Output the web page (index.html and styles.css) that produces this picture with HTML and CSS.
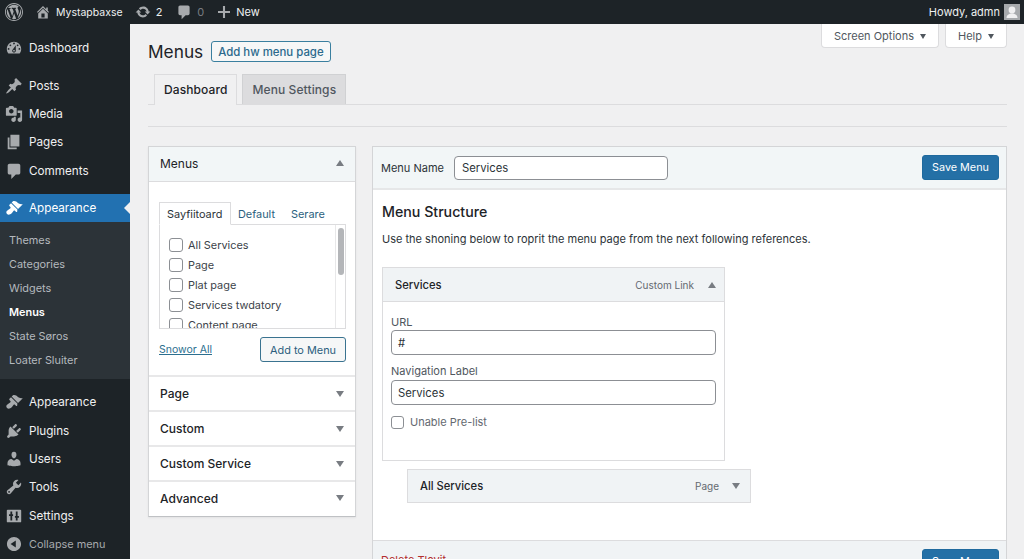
FILE: index.html
```html
<!DOCTYPE html>
<html lang="en">
<head>
<meta charset="utf-8">
<title>Menus</title>
<link rel="stylesheet" href="styles.css">
</head>
<body>
<header class="adminbar">
  <div class="bar-left">
    <svg class="bar-logo" viewBox="0 0 20 20"><path d="M20 10c0-5.52-4.48-10-10-10S0 4.48 0 10s4.48 10 10 10 10-4.48 10-10zM10 1.01c4.97 0 8.99 4.02 8.99 8.99s-4.02 8.99-8.99 8.99S1.01 14.97 1.01 10 5.03 1.01 10 1.01zM8.01 14.82L4.96 6.61c.49-.03 1.05-.08 1.05-.08.43-.05.38-1.01-.06-.99 0 0-1.29.1-2.13.1-.15 0-.33 0-.52-.01 1.44-2.17 3.9-3.6 6.7-3.6 2.09 0 3.99.79 5.41 2.09-.6-.08-1.45.35-1.45 1.42 0 .66.38 1.22.79 1.88.31.54.5 1.22.5 2.21 0 1.34-1.27 4.48-1.27 4.48l-2.71-7.5c.48-.03.75-.16.75-.16.43-.05.38-1.1-.05-1.08 0 0-1.3.11-2.14.11-.78 0-2.11-.11-2.11-.11-.43-.02-.48 1.06-.05 1.08l.84.08 1.12 3.04zm6.02 2.15L16.64 10s.67-1.69.39-3.81c.63 1.14.94 2.42.94 3.81 0 2.96-1.56 5.58-3.94 6.97zM2.68 6.77L6.5 17.25c-2.67-1.3-4.47-4.08-4.47-7.25 0-1.16.2-2.23.65-3.23zm7.45 4.53l2.29 6.25c-.75.27-1.57.42-2.42.42-.72 0-1.41-.11-2.06-.3z"/></svg>
    <span class="bar-item site"><svg class="bar-ico" viewBox="0 0 20 20"><path d="M16 8.5l1.53 1.53-1.06 1.06L10 4.62l-6.47 6.47-1.06-1.06L10 2.5l4 4v-2h2v4zm-6-2.46l6 5.99V18H4v-5.97zM12 17v-5H8v5h4z"/></svg>Mystapbaxse</span>
    <span class="bar-item updates"><svg class="bar-ico" viewBox="0 0 20 20"><path d="M10.2 3.28c3.53 0 6.43 2.61 6.92 6h2.08l-3.5 4-3.5-4h2.32c-.45-1.97-2.21-3.45-4.32-3.45-1.45 0-2.73.71-3.54 1.78L4.95 5.66C6.23 4.2 8.11 3.28 10.2 3.28zm-.4 13.44c-3.52 0-6.43-2.61-6.92-6H.8l3.5-4c1.17 1.33 2.33 2.67 3.5 4H5.48c.45 1.97 2.21 3.45 4.32 3.45 1.45 0 2.73-.71 3.54-1.78l1.71 1.95c-1.28 1.46-3.15 2.38-5.25 2.38z"/></svg>2</span>
    <span class="bar-item comments"><svg class="bar-ico" viewBox="0 0 20 20"><path d="M5 2h10c1.1 0 2 .9 2 2v8c0 1.1-.9 2-2 2h-3l-5 5v-5H5c-1.1 0-2-.9-2-2V4c0-1.1.9-2 2-2z"/></svg><span class="dim">0</span></span>
    <span class="bar-item new"><svg class="bar-ico" viewBox="0 0 20 20"><path d="M8.7 2.5h2.6v6.2h6.2v2.6h-6.2v6.2H8.7v-6.2H2.5V8.7h6.2z"/></svg>New</span>
  </div>
  <div class="bar-right">
    <span>Howdy, admn</span>
    <svg class="avatar" viewBox="0 0 16 16"><rect width="16" height="16" fill="#a7aaad"/><circle cx="8" cy="6" r="3.4" fill="#f0f0f1"/><path d="M2.5 14c0-3 2.4-4.6 5.5-4.6s5.5 1.6 5.5 4.6z" fill="#f0f0f1"/></svg>
  </div>
</header>
<div class="layout">
  <nav class="sidebar">
    <ul class="menu menu-top">
      <li><svg class="ico" viewBox="0 0 20 20"><path d="M3.76 16h12.48c1.1-1.37 1.76-3.11 1.76-5 0-4.42-3.58-8-8-8s-8 3.58-8 8c0 1.89.66 3.63 1.76 5zM10 4c.55 0 1 .45 1 1s-.45 1-1 1-1-.45-1-1 .45-1 1-1zM6 6c.55 0 1 .45 1 1s-.45 1-1 1-1-.45-1-1 .45-1 1-1zm8 0c.55 0 1 .45 1 1s-.45 1-1 1-1-.45-1-1 .45-1 1-1zm-5.37 5.55L12 7v6c0 1.1-.9 2-2 2s-2-.9-2-2c0-.57.24-1.08.63-1.45zM4 10c.55 0 1 .45 1 1s-.45 1-1 1-1-.45-1-1 .45-1 1-1zm12 0c.55 0 1 .45 1 1s-.45 1-1 1-1-.45-1-1 .45-1 1-1zm-5 3c0-.55-.45-1-1-1s-1 .45-1 1 .45 1 1 1 1-.45 1-1z"/></svg>Dashboard</li>
    </ul>
    <ul class="menu menu-group">
      <li><svg class="ico" viewBox="0 0 20 20"><path d="M10.44 3.02l1.82-1.82 6.36 6.35-1.83 1.82c-1.05-.68-2.48-.57-3.41.36l-.75.75c-.92.93-1.04 2.35-.35 3.41l-1.83 1.82-2.41-2.41-2.8 2.79c-.42.42-3.38 2.71-3.8 2.29s1.86-3.39 2.28-3.81l2.79-2.79L4.1 9.36l1.83-1.82c1.05.69 2.48.57 3.4-.36l.75-.75c.93-.92 1.05-2.35.36-3.41z"/></svg>Posts</li>
      <li><svg class="ico" viewBox="0 0 20 20"><path d="M13 11V4c0-.55-.45-1-1-1h-1.67L9 1H5L3.67 3H2c-.55 0-1 .45-1 1v7c0 .55.45 1 1 1h10c.55 0 1-.45 1-1zM7 4.5c1.38 0 2.5 1.12 2.5 2.5S8.38 9.5 7 9.5 4.5 8.38 4.5 7 5.62 4.5 7 4.5zM14 6h5v10.5c0 1.38-1.12 2.5-2.5 2.5S14 17.88 14 16.5s1.12-2.5 2.5-2.5c.17 0 .34.02.5.05V9h-3V6zm-4 8.05V13h2v3.5c0 1.38-1.12 2.5-2.5 2.5S7 17.88 7 16.5 8.12 14 9.5 14c.17 0 .34.02.5.05z"/></svg>Media</li>
      <li><svg class="ico" viewBox="0 0 20 20"><path d="M6 15V2h10v13H6zm-1 1h8v2H3V5h2v11z"/></svg>Pages</li>
      <li><svg class="ico" viewBox="0 0 20 20"><path d="M5 2h10c1.1 0 2 .9 2 2v8c0 1.1-.9 2-2 2h-3l-5 5v-5H5c-1.1 0-2-.9-2-2V4c0-1.1.9-2 2-2z"/></svg>Comments</li>
    </ul>
    <div class="menu-current">
      <svg class="ico" viewBox="0 0 20 20"><path d="M14.48 11.06L7.41 3.99l1.5-1.5c.5-.56 2.3-.47 3.51.32 1.21.8 1.43 1.28 2.91 2.1 1.18.64 2.45 1.26 4.45.85zm-.71.71L6.7 4.7 4.93 6.47c-.39.39-.39 1.02 0 1.41l1.06 1.06c.39.39.39 1.03 0 1.42-.6.6-1.43 1.11-2.21 1.69-.35.26-.7.53-1.01.84C1.43 13.23.91 15.39 2.26 16.72c1.33 1.35 3.49.83 4.84-.52.3-.3.57-.65.83-1 .58-.78 1.09-1.61 1.7-2.21.39-.39 1.02-.39 1.41 0l1.06 1.06c.39.39 1.02.39 1.41 0z"/></svg>Appearance
    </div>
    <ul class="submenu">
      <li>Themes</li>
      <li>Categories</li>
      <li>Widgets</li>
      <li class="sub-current">Menus</li>
      <li>State Søros</li>
      <li>Loater Sluiter</li>
    </ul>
    <ul class="menu menu-lower">
      <li><svg class="ico" viewBox="0 0 20 20"><path d="M14.48 11.06L7.41 3.99l1.5-1.5c.5-.56 2.3-.47 3.51.32 1.21.8 1.43 1.28 2.91 2.1 1.18.64 2.45 1.26 4.45.85zm-.71.71L6.7 4.7 4.93 6.47c-.39.39-.39 1.02 0 1.41l1.06 1.06c.39.39.39 1.03 0 1.42-.6.6-1.43 1.11-2.21 1.69-.35.26-.7.53-1.01.84C1.43 13.23.91 15.39 2.26 16.72c1.33 1.35 3.49.83 4.84-.52.3-.3.57-.65.83-1 .58-.78 1.09-1.61 1.7-2.21.39-.39 1.02-.39 1.41 0l1.06 1.06c.39.39 1.02.39 1.41 0z"/></svg>Appearance</li>
      <li><svg class="ico" viewBox="0 0 20 20"><path d="M13.11 4.36L9.87 7.6 8 5.73l3.24-3.24c.35-.34 1.05-.2 1.56.32.52.51.66 1.21.31 1.55zm-8 1.77l.91-1.12 9.01 9.01-1.19.84c-.71.71-2.63 1.16-3.82 1.16H6.14L4.9 17.26c-.59.59-1.54.59-2.12 0-.59-.58-.59-1.53 0-2.12l1.24-1.24v-3.88c0-1.13.4-3.19 1.09-3.89zm7.26 3.97l3.24-3.24c.34-.35 1.04-.21 1.55.31.52.51.66 1.21.31 1.55l-3.24 3.25z"/></svg>Plugins</li>
      <li><svg class="ico" viewBox="0 0 20 20"><path d="M10 9.25c-2.27 0-2.73-3.44-2.73-3.44C7 4.02 7.82 2 9.97 2c2.16 0 2.98 2.02 2.71 3.81 0 0-.41 3.44-2.68 3.44zm0 2.57L12.72 10c2.39 0 4.52 2.33 4.52 4.53v2.49s-3.65 1.13-7.24 1.13c-3.65 0-7.24-1.13-7.24-1.13v-2.49c0-2.25 1.94-4.48 4.47-4.48z"/></svg>Users</li>
      <li><svg class="ico" viewBox="0 0 20 20"><path d="M16.68 9.77c-1.34 1.34-3.3 1.67-4.95.99l-5.41 6.52c-.99.99-2.59.99-3.58 0s-.99-2.59 0-3.57l6.52-5.42c-.68-1.65-.35-3.61.99-4.95 1.28-1.28 3.12-1.62 4.72-1.06l-2.89 2.89 2.82 2.82 2.86-2.87c.53 1.58.18 3.39-1.08 4.65zM3.81 16.21c.4.39 1.04.39 1.43 0 .4-.4.4-1.04 0-1.43-.39-.4-1.03-.4-1.43 0-.39.39-.39 1.03 0 1.43z"/></svg>Tools</li>
      <li><svg class="ico" viewBox="0 0 20 20"><path fill-rule="evenodd" d="M3 3h14a1 1 0 0 1 1 1v12a1 1 0 0 1-1 1H3a1 1 0 0 1-1-1V4a1 1 0 0 1 1-1zm3 2v3H4.5v2H6v5h2v-5h1V8H8V5zm6 0v5h-1v2h1v3h2v-3h1.5v-2H14V5z"/></svg>Settings</li>
      <li class="collapse"><svg class="ico" viewBox="0 0 20 20"><path d="M10 2.16c4.33 0 7.84 3.51 7.84 7.84s-3.51 7.84-7.84 7.84S2.16 14.33 2.16 10 5.71 2.16 10 2.16zm2 11.72V6.12L6.18 9.97z"/></svg>Collapse menu</li>
    </ul>
  </nav>
  <main class="content">
    <div class="screen-meta">
      <span class="meta-tab">Screen Options<i class="caret-down dark"></i></span>
      <span class="meta-tab">Help<i class="caret-down dark"></i></span>
    </div>
    <div class="title-row">
      <h1>Menus</h1>
      <a class="btn-outline">Add hw menu page</a>
    </div>
    <div class="tabs">
      <span class="tab tab-active">Dashboard</span>
      <span class="tab">Menu Settings</span>
    </div>
    <hr class="rule">
    <div class="columns">
      <aside class="side-panel">
        <div class="acc-open">
          <div class="acc-head tinted"><span>Menus</span><i class="caret-up"></i></div>
          <div class="acc-body">
            <div class="mini-tabs">
              <span class="mini-tab mini-active">Sayfiitoard</span>
              <span class="mini-tab">Default</span>
              <span class="mini-tab">Serare</span>
            </div>
            <div class="list-box">
              <ul class="check-list">
                <li><i class="check"></i>All Services</li>
                <li><i class="check"></i>Page</li>
                <li><i class="check"></i>Plat page</li>
                <li><i class="check"></i>Services twdatory</li>
                <li><i class="check"></i>Content page</li>
              </ul>
              <div class="scroll-track"><div class="scroll-thumb"></div></div>
            </div>
            <div class="acc-actions">
              <a class="select-all">Snowor All</a>
              <a class="btn-add">Add to Menu</a>
            </div>
          </div>
        </div>
        <div class="acc-head"><span>Page</span><i class="caret-down"></i></div>
        <div class="acc-head"><span>Custom</span><i class="caret-down"></i></div>
        <div class="acc-head"><span>Custom Service</span><i class="caret-down"></i></div>
        <div class="acc-head last"><span>Advanced</span><i class="caret-down"></i></div>
      </aside>
      <section class="editor">
        <div class="editor-head">
          <label class="name-label">Menu Name</label>
          <div class="field name-field">Services</div>
          <a class="btn-primary">Save Menu</a>
        </div>
        <div class="editor-body">
          <h2>Menu Structure</h2>
          <p class="intro">Use the shoning below to roprit the menu page from the next following references.</p>
          <div class="item-card">
            <div class="item-head"><strong>Services</strong><span class="item-type">Custom Link</span><i class="caret-up"></i></div>
            <div class="item-body">
              <label class="f-label">URL</label>
              <div class="field wide">#</div>
              <label class="f-label second">Navigation Label</label>
              <div class="field wide">Services</div>
              <div class="check-row"><i class="check"></i>Unable Pre-list</div>
            </div>
          </div>
          <div class="item-closed">
            <strong>All Services</strong><span class="item-type">Page</span><i class="caret-down"></i>
          </div>
        </div>
        <div class="editor-foot">
          <a class="delete">Delete Tlovit</a>
          <a class="btn-primary">Save Menu</a>
        </div>
      </section>
    </div>
  </main>
</div>
</body>
</html>
```
FILE: styles.css
```css
* { box-sizing: border-box; }
html, body { margin: 0; height: 559px; overflow: hidden; }
body { font-family: Inter, "Liberation Sans", sans-serif; background: #f0f0f1; color: #1d2327; font-size: 12px; }
ul { list-style: none; margin: 0; padding: 0; }
i { font-style: normal; display: block; }

.adminbar { height: 24px; background: #1d2327; color: #eef0f1; display: flex; justify-content: space-between; align-items: center; font-size: 11px; }
.bar-left, .bar-right { display: flex; align-items: center; }
.bar-logo { width: 18px; height: 18px; margin-left: 5px; fill: #a7aaad; }
.bar-item { display: flex; align-items: center; }
.bar-ico { width: 16px; height: 16px; fill: #a7aaad; margin-right: 5px; }
.site { margin-left: 12px; font-size: 10.5px; }
.updates { margin-left: 12px; }
.comments { margin-left: 14px; }
.new { margin-left: 12px; }
.new .bar-ico { margin-right: 4px; }
.dim { color: #787c82; }
.bar-right { padding-right: 4px; gap: 4px; }
.avatar { width: 16px; height: 16px; }

.layout { display: flex; height: 535px; }
.sidebar { width: 130px; flex: none; background: #1d2327; color: #f0f0f1; font-size: 11.7px; padding-top: 10px; }
.menu li, .menu-current { height: 28.4px; display: flex; align-items: center; padding-left: 5px; }
.ico { width: 18px; height: 18px; fill: #a7aaad; margin-right: 6px; flex: none; }
.menu-group { margin-top: 9px; }
.menu-current { height: 28px; margin-top: 9px; background: #2271b1; color: #fff; position: relative; padding-top: 1px; }
.menu-current .ico { fill: #fff; }
.menu-current::after { content: ""; position: absolute; right: 0; top: 8px; border: 6px solid transparent; border-right-color: #f0f0f1; border-left-width: 0; }
.submenu { background: #2c3338; height: 157px; padding: 6px 0 0 9px; color: #b4b9be; font-size: 10.9px; }
.submenu li { height: 24px; display: flex; align-items: center; }
.sub-current { color: #fff; font-weight: 600; }
.menu-lower { margin-top: 9px; }
.collapse { color: #a7aaad; font-size: 10.9px; }

.content { flex: 1; min-width: 0; padding: 0 17px 0 18px; }
.screen-meta { float: right; display: flex; gap: 6px; }
.meta-tab { height: 24px; padding: 1px 12px 0 12px; background: #fff; border: 1px solid #dcdcde; border-top: 0; border-radius: 0 0 4px 4px; display: flex; align-items: center; gap: 6px; font-size: 11px; color: #50575e; }
.title-row { display: flex; align-items: center; gap: 8px; padding-top: 17px; height: 38px; }
h1 { font-size: 17.3px; font-weight: 400; margin: 0; color: #1d2327; }
.btn-outline { height: 21px; display: flex; align-items: center; padding: 0 6px; border: 1px solid #3a7f9f; border-radius: 3px; background: #f6f7f7; color: #2b6a8d; font-size: 11.4px; font-weight: 500; }
.tabs { clear: both; display: flex; gap: 5px; margin-top: 12px; padding-left: 6px; height: 31px; border-bottom: 1px solid #dcdcde; }
.tab { height: 30px; padding: 0 9px; display: flex; align-items: center; background: #dcdcde; border: 1px solid #d0d1d3; border-bottom: 0; color: #50575e; font-size: 12px; font-weight: 500; letter-spacing: .1px; }
.tab-active { background: #f0f0f1; height: 31px; padding-bottom: 1px; color: #1d2327; border-color: #dcdcde; }
.rule { border: 0; height: 1px; background: #dcdcde; margin: 21px 0 19px; }
.columns { display: flex; align-items: flex-start; gap: 16px; }

.side-panel { width: 208px; flex: none; background: #fff; border: 1px solid #d4d5d7; border-bottom-color: #bfc1c4; box-shadow: 0 1px 2px rgba(0,0,0,.06); }
.acc-head { height: 35px; display: flex; align-items: center; justify-content: space-between; padding: 0 11px; font-size: 12px; font-weight: 500; border-bottom: 2px solid #e8e8e9; color: #1d2327; }
.acc-head.last { border-bottom: 0; height: 34px; padding-bottom: 2px; }
.acc-head.tinted { background: #f2f6f7; border-bottom-width: 1px; border-bottom-color: #dcdcde; font-weight: 400; padding-bottom: 2px; }
.caret-up, .caret-down { width: 0; height: 0; border-left: 4px solid transparent; border-right: 4px solid transparent; }
.caret-up { border-bottom: 6px solid #787c82; }
.caret-down { border-top: 6px solid #787c82; }
.caret-down.dark { border-left-width: 3.5px; border-right-width: 3.5px; border-top: 5px solid #50575e; }
.acc-body { padding: 20px 9px 15px 10px; border-bottom: 2px solid #e8e8e9; height: 195px; }
.mini-tabs { display: flex; height: 23px; position: relative; z-index: 1; font-size: 10.9px; }
.mini-tab { display: flex; align-items: center; color: #2c5f7e; padding: 0 0 0 7px; margin-right: 8px; }
.mini-tab + .mini-tab { margin-right: 9px; }
.mini-active { width: 72px; padding-left: 7px; margin-right: 0; color: #2c3338; background: #fff; border: 1px solid #dcdcde; border-bottom-color: #fff; }
.list-box { height: 105px; margin-top: -1px; border: 1px solid #dcdcde; display: flex; justify-content: space-between; overflow: hidden; }
.check-list { padding: 10px 0 0 9px; font-size: 10.9px; color: #3c434a; }
.check-list li { height: 20px; display: flex; align-items: center; gap: 5px; }
.check { width: 14px; height: 14px; border: 1px solid #8c8f94; border-radius: 3px; background: #fff; flex: none; }
.scroll-track { width: 10px; border-left: 1px solid #e8e8e9; padding: 3px 2px; }
.scroll-thumb { height: 47px; width: 6px; background: #b4b6b9; border-radius: 3px; }
.acc-actions { display: flex; justify-content: space-between; align-items: center; margin-top: 8px; }
.select-all { color: #2c6f8f; text-decoration: underline; font-size: 10.5px; }
.btn-add { height: 25px; width: 86px; display: flex; align-items: center; justify-content: center; border: 1px solid #3a7390; border-radius: 3px; background: #f6f7f7; color: #2c5f7e; font-size: 10.9px; }

.editor { flex: 1; min-width: 0; background: #fff; border: 1px solid #d4d5d7; height: 430px; }
.editor-head { height: 43px; background: #f2f6f7; border-bottom: 2px solid #e6e7e8; display: flex; align-items: center; padding: 0 7px 0 8px; font-size: 11px; }
.name-label { margin-right: 10px; color: #2c3338; }
.field { height: 25px; border: 1px solid #8c8f94; border-radius: 4px; background: #fff; display: flex; align-items: center; padding: 0 6px; font-size: 11.3px; color: #2c3338; }
.name-field { width: 214px; height: 24px; padding-left: 7px; }
.btn-primary { height: 25px; width: 77px; display: flex; align-items: center; justify-content: center; margin-left: auto; background: #2470a6; border: 1px solid #1f6a9e; border-radius: 3px; color: #fff; font-size: 10.8px; }
.editor-body { height: 351px; padding: 13px 9px 0; border-bottom: 1px solid #dcdcde; }
h2 { font-size: 14.2px; font-weight: 500; margin: 0; line-height: 18px; color: #1d2327; }
.intro { margin: 11px 0 0; font-size: 11px; line-height: 14px; color: #2c3338; }
.item-card { width: 343px; height: 194px; margin-top: 21px; border: 1px solid #dcdcde; }
.item-head, .item-closed { display: flex; align-items: center; background: #f0f3f5; height: 34px; padding: 0 8px 0 12px; font-size: 11.5px; }
.item-head { border-bottom: 1px solid #dcdcde; }
.item-head strong, .item-closed strong { font-weight: 500; margin-right: auto; color: #1d2327; font-size: 11.2px; }
.item-type { color: #646970; font-size: 10px; margin-right: 14px; }
.item-body { padding: 14px 8px 0; }
.f-label { display: block; font-size: 11px; line-height: 13px; color: #50575e; margin-bottom: 1px; }
.f-label.second { margin-top: 10px; margin-bottom: 2px; }
.wide { width: 325px; }
.check-row { display: flex; align-items: center; gap: 6px; margin-top: 10px; font-size: 11px; color: #646970; }
.check-row .check { width: 13px; height: 13px; }
.item-closed { width: 344px; margin: 8px 0 0 25px; border: 1px solid #dcdcde; padding-right: 10px; }
.item-closed .item-type { margin-right: 13px; }
.editor-foot { background: #f0f3f5; height: 40px; display: flex; align-items: flex-start; padding: 8px 7px 0 8px; }
.delete { color: #b32d2e; font-size: 11px; margin-top: 4px; }
```
